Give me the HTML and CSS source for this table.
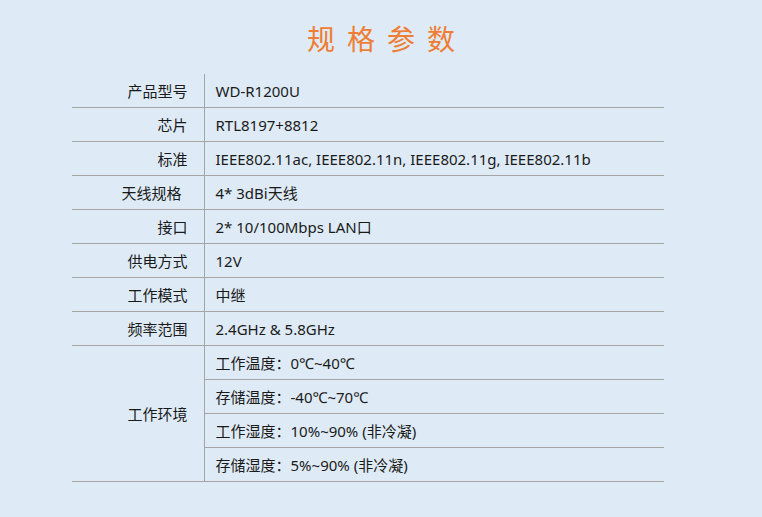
FILE: index.html
```html
<!DOCTYPE html>
<html lang="zh-CN">
<head>
<meta charset="utf-8">
<title>规格参数</title>
<link rel="stylesheet" href="styles.css">
</head>
<body>
<div class="page">
  <h1 class="title">规格参数</h1>
  <table class="spec">
    <colgroup><col class="c1"><col class="c2"></colgroup>
    <tbody>
      <tr><th>产品型号</th><td>WD-R1200U</td></tr>
      <tr><th>芯片</th><td>RTL8197+8812</td></tr>
      <tr><th>标准</th><td>IEEE802.11ac, IEEE802.11n, IEEE802.11g, IEEE802.11b</td></tr>
      <tr><th class="pad">天线规格</th><td>4* 3dBi天线</td></tr>
      <tr><th>接口</th><td>2* 10/100Mbps LAN口</td></tr>
      <tr><th>供电方式</th><td>12V</td></tr>
      <tr><th>工作模式</th><td>中继</td></tr>
      <tr><th>频率范围</th><td>2.4GHz &amp; 5.8GHz</td></tr>
      <tr><th rowspan="4">工作环境</th><td>工作温度：0℃~40℃</td></tr>
      <tr><td>存储温度：-40℃~70℃</td></tr>
      <tr><td>工作湿度：10%~90% (非冷凝)</td></tr>
      <tr class="last"><td>存储湿度：5%~90% (非冷凝)</td></tr>
    </tbody>
  </table>
</div>
</body>
</html>
```
FILE: styles.css
```css
html, body {
  margin: 0;
  padding: 0;
  background: #deebf6;
}
body {
  width: 762px;
  height: 517px;
  overflow: hidden;
  font-family: "Noto Sans", "Noto Sans CJK SC", sans-serif;
  color: #1a1a1a;
}
.page {
  padding: 0 98px 0 72px;
}
.title {
  margin: 0 -98px 0 -72px;
  height: 74px;
  line-height: 76px;
  text-align: center;
  font-family: "Noto Sans CJK SC", sans-serif;
  font-size: 28px;
  font-weight: 400;
  letter-spacing: 12px;
  text-indent: 12px;
  color: #ef7d33;
}
.spec {
  width: 592px;
  table-layout: fixed;
  border-collapse: collapse;
  font-size: 15px;
}
.spec .c1 { width: 132px; }
.spec th, .spec td {
  height: 33px;
  padding: 0;
  border-bottom: 1px solid #a5a5a5;
  vertical-align: middle;
  font-weight: 400;
  line-height: 20px;
  white-space: nowrap;
}
.spec th {
  padding-right: 16px;
  text-align: right;
  border-right: 1px solid #a5a5a5;
}
.spec th.pad {
  padding-right: 22px;
}
.spec td {
  padding-left: 11px;
  text-align: left;
}
```
